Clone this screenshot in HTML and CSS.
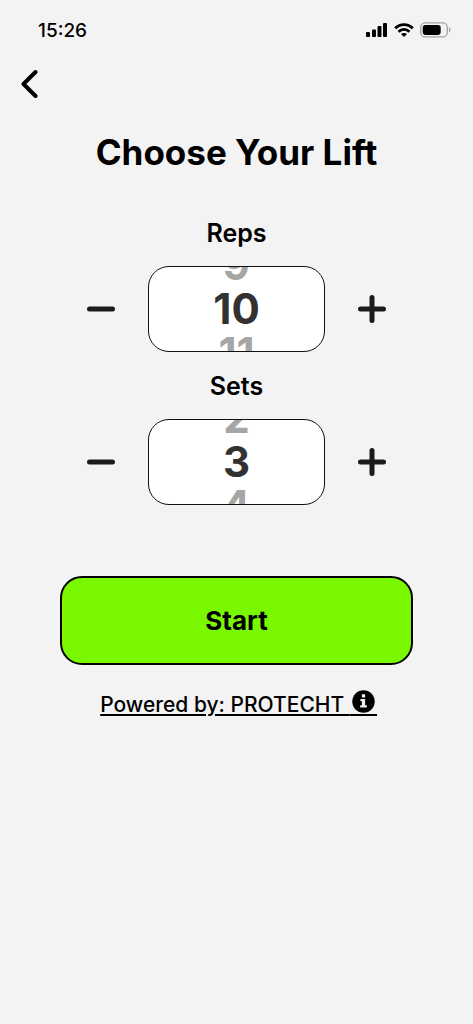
FILE: index.html
```html
<!DOCTYPE html>
<html lang="en">
<head>
<meta charset="utf-8">
<meta name="viewport" content="width=device-width, initial-scale=1">
<title>Choose Your Lift</title>
<link rel="stylesheet" href="styles.css">
</head>
<body>
<header class="status">
  <time class="clock">15:26</time>
  <div class="indicators">
    <svg width="22" height="14" viewBox="0 0 22 14" aria-hidden="true">
      <rect x="0" y="9" width="4" height="5" rx="1"/>
      <rect x="6" y="6.500" width="4" height="7.500" rx="1"/>
      <rect x="11.500" y="3" width="4" height="11" rx="1"/>
      <rect x="17" y="0" width="4" height="14" rx="1"/>
    </svg>
    <svg width="20" height="14" viewBox="0 0 20 14" aria-hidden="true">
      <g fill="none" stroke="#000" stroke-width="2.700">
        <path d="M1.200 5.300C6.200.300 13.800.300 18.800 5.300"/>
        <path d="M4.500 8.700C7.700 5.600 12.300 5.600 15.500 8.700"/>
      </g>
      <path d="M10 14 7 11C8.700 9.600 11.300 9.600 13 11Z"/>
    </svg>
    <svg width="31" height="16" viewBox="0 0 31 16" aria-hidden="true">
      <rect x=".700" y=".900" width="26.600" height="14" rx="4.500" fill="none" stroke="#a2a2a2" stroke-width="1.300"/>
      <rect x="2.700" y="2.900" width="18" height="10" rx="2.800"/>
      <path d="M29 5.300C31 6.200 31 9.500 29 10.400Z" fill="#a2a2a2"/>
    </svg>
  </div>
</header>
<nav class="nav">
  <button class="back" type="button" aria-label="Back">
    <svg width="18" height="30" viewBox="0 0 18 30" aria-hidden="true"><path d="M15.500 3 3.500 15 15.500 27" fill="none" stroke="#000" stroke-width="4" stroke-linecap="round" stroke-linejoin="round"/></svg>
  </button>
</nav>
<main class="main">
  <h1 class="title">Choose Your Lift</h1>
  <section class="field">
    <h2 class="label" id="reps">Reps</h2>
    <div class="stepper">
      <button class="step" type="button" aria-label="Fewer reps">
        <svg width="30" height="30" viewBox="0 0 30 30" aria-hidden="true"><path d="M3.500 15H26.500"/></svg>
      </button>
      <div class="wheel" role="spinbutton" tabindex="0" aria-labelledby="reps" aria-valuenow="10">
        <span class="option">9</span>
        <span class="option current">10</span>
        <span class="option">11</span>
      </div>
      <button class="step" type="button" aria-label="More reps">
        <svg width="30" height="30" viewBox="0 0 30 30" aria-hidden="true"><path d="M3.500 15H26.500M15 3.500V26.500"/></svg>
      </button>
    </div>
  </section>
  <section class="field">
    <h2 class="label" id="sets">Sets</h2>
    <div class="stepper">
      <button class="step" type="button" aria-label="Fewer sets">
        <svg width="30" height="30" viewBox="0 0 30 30" aria-hidden="true"><path d="M3.500 15H26.500"/></svg>
      </button>
      <div class="wheel" role="spinbutton" tabindex="0" aria-labelledby="sets" aria-valuenow="3">
        <span class="option">2</span>
        <span class="option current">3</span>
        <span class="option">4</span>
      </div>
      <button class="step" type="button" aria-label="More sets">
        <svg width="30" height="30" viewBox="0 0 30 30" aria-hidden="true"><path d="M3.500 15H26.500M15 3.500V26.500"/></svg>
      </button>
    </div>
  </section>
  <button class="start" type="button">Start</button>
  <a class="powered" href="#about">Powered by: PROTECHT <span class="info"><svg width="23" height="23" viewBox="0 0 24 24" aria-hidden="true"><circle cx="12" cy="12" r="11.700"/><path d="M10.300 4.500H13.700V7.700H10.300ZM8.800 9.500H13.700V16H15.500V18.300H8.500V16H10.300V11.800H8.800Z" fill="#f3f3f3"/></svg></span></a>
</main>
</body>
</html>
```
FILE: styles.css
```css
* { box-sizing: border-box; }

body {
  margin: 0;
  min-height: 100vh;
  background: #f3f3f3;
  color: #000;
  font-family: Inter, "Liberation Sans", sans-serif;
}

button {
  padding: 0;
  border: 0;
  background: none;
  color: inherit;
  font: inherit;
  cursor: pointer;
}

svg { display: block; }

.status {
  display: flex;
  align-items: center;
  justify-content: space-between;
  height: 60px;
  padding: 0 22px 0 38px;
}

.clock {
  font-size: 19px;
  font-weight: 500;
}

.indicators {
  display: flex;
  align-items: center;
  gap: 6px;
}

.nav { padding: 4px 20px 0; }

.back {
  display: flex;
  align-items: center;
  height: 40px;
}

.main {
  display: flex;
  flex-direction: column;
  align-items: center;
  padding: 24px 60px;
}

.title {
  margin: 0 0 37px;
  font-size: 35px;
  font-weight: 700;
  line-height: 48px;
}

.field {
  width: 100%;
  margin-bottom: 14px;
}

.label {
  margin: 0 0 13px;
  font-size: 25px;
  font-weight: 600;
  line-height: 40px;
  text-align: center;
}

.stepper {
  display: grid;
  grid-template-columns: 1fr 177px 1fr;
  align-items: center;
  margin: 0 -6px;
}

.step {
  display: grid;
  height: 60px;
  place-items: center;
}

.step path {
  fill: none;
  stroke: #1b1b1b;
  stroke-width: 5;
  stroke-linecap: round;
}

.wheel {
  display: flex;
  flex-direction: column;
  align-items: center;
  justify-content: center;
  height: 86px;
  overflow: hidden;
  border: 1px solid #111;
  border-radius: 21px;
  background: #fff;
}

.option {
  flex: none;
  color: #a6a6a6;
  font-size: 42px;
  font-weight: 700;
  line-height: 44px;
}

.current { color: #323232; }

.start {
  width: 100%;
  height: 89px;
  margin: 57px 0 24px;
  border: 2px solid #000;
  border-radius: 22px;
  background: #7af800;
  font-size: 26px;
  font-weight: 700;
}

.powered {
  padding-left: 4px;
  color: inherit;
  font-size: 21px;
  font-weight: 500;
  line-height: 32px;
  text-decoration: underline;
  text-decoration-thickness: 2px;
  text-underline-offset: 2px;
}

.info {
  display: inline-block;
  height: 26px;
  padding: 0 2px;
  border-bottom: 2px solid;
  vertical-align: -4px;
}
```
